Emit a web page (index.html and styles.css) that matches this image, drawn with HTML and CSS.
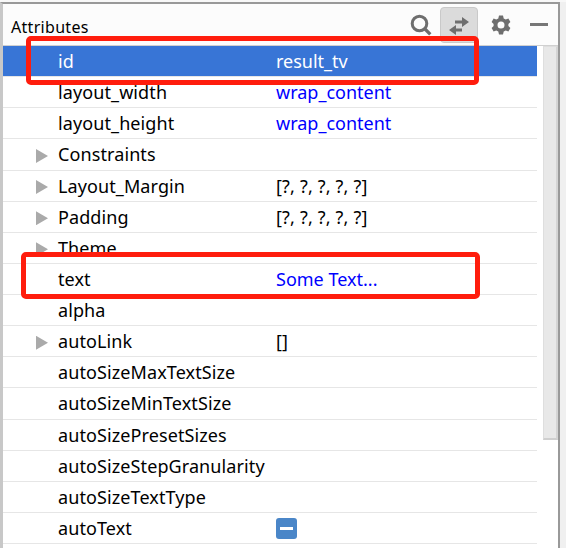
FILE: index.html
```html
<!DOCTYPE html>
<html lang="en">
<head>
<meta charset="utf-8">
<title>Attributes</title>
<link rel="stylesheet" href="styles.css">
</head>
<body>
<main class="panel">
  <header class="header">
    <h1 class="title">Attributes</h1>
    <div class="tools">
      <svg class="tool" width="24" height="24" viewBox="0 0 24 24"><circle cx="10.500" cy="10.500" r="7.300" fill="none" stroke="#6e6e6e" stroke-width="3"/><path d="M15.500 15.500l5.800 5.800" stroke="#6e6e6e" stroke-width="3.300"/></svg>
      <span class="toggle"><svg width="22" height="20" viewBox="0 0 22 20"><path d="M7 4.500h7V1l7 5-7 5V7.500H7zM14 12.500H8V9l-7 5 7 5v-3.500h6z" fill="#6e6e6e"/></svg></span>
      <svg class="tool gear" width="20" height="20" viewBox="0 0 20 20"><path fill="#6e6e6e" fill-rule="evenodd" d="M8 .5h4l.7 2.900 2 1.100 2.700-.9 2 3.500-2 1.900v2l2 1.900-2 3.500-2.700-.9-2 1.100-.7 2.900H8l-.7-2.900-2-1.100-2.700.9-2-3.500 2-1.900V9l-2-1.900 2-3.500 2.700.9 2-1.100zM10 6.500a3.500 3.500 0 1 0 0 7 3.500 3.500 0 0 0 0-7z"/></svg>
      <span class="minimize"></span>
    </div>
  </header>
  <div class="body">
    <div class="rows">
      <div class="row selected"><i></i><span>id</span><b>result_tv</b></div>
      <div class="row"><i></i><span>layout_width</span><b class="set">wrap_content</b></div>
      <div class="row"><i></i><span>layout_height</span><b class="set">wrap_content</b></div>
      <div class="row"><i class="arrow"></i><span>Constraints</span></div>
      <div class="row"><i class="arrow"></i><span>Layout_Margin</span><b class="list">[?, ?, ?, ?, ?]</b></div>
      <div class="row"><i class="arrow"></i><span>Padding</span><b class="list">[?, ?, ?, ?, ?]</b></div>
      <div class="row"><i class="arrow"></i><span>Theme</span></div>
      <div class="row"><i></i><span>text</span><b class="set">Some Text...</b></div>
      <div class="row"><i></i><span>alpha</span></div>
      <div class="row"><i class="arrow"></i><span>autoLink</span><b class="list">[]</b></div>
      <div class="row"><i></i><span>autoSizeMaxTextSize</span></div>
      <div class="row"><i></i><span>autoSizeMinTextSize</span></div>
      <div class="row"><i></i><span>autoSizePresetSizes</span></div>
      <div class="row"><i></i><span>autoSizeStepGranularity</span></div>
      <div class="row"><i></i><span>autoSizeTextType</span></div>
      <div class="row"><i></i><span>autoText</span><em class="check"></em></div>
    </div>
    <div class="thumb"></div>
  </div>
</main>
<div class="mark mark-id"></div>
<div class="mark mark-text"></div>
</body>
</html>
```
FILE: styles.css
```css
* { box-sizing: border-box; }
body {
  margin: 0;
  width: 566px;
  height: 550px;
  overflow: hidden;
  position: relative;
  background: linear-gradient(#f8f8f8 2px, transparent 2px), linear-gradient(90deg, transparent 560px, #f0f0f0 560px) 0 0 / 566px 548px no-repeat, #fff;
  font-family: "Noto Sans", "Open Sans", sans-serif;
  color: #000;
}
.panel {
  width: 560px;
  height: 546px;
  margin-top: 2px;
  border: solid;
  border-width: 2px 2px 0 3px;
  border-color: #999 #999 #999 #c8c8c8;
  background: #fff;
}
.header {
  height: 42px;
  display: flex;
  justify-content: space-between;
  background: #fcfcfc;
  border-bottom: 1px solid #d0d0d0;
}
.title {
  margin: 11px 0 0 8px;
  font-size: 16px;
  line-height: 24px;
  font-weight: 400;
  letter-spacing: .3px;
}
.tools { display: flex; align-items: flex-start; }
.tool { margin-top: 9px; }
.toggle {
  width: 38px;
  height: 36px;
  margin: 3px 0 0 7px;
  padding: 8px 0 0 7px;
  border: 1px solid #c9c9c9;
  border-radius: 4px;
  background: #dbdbdb;
}
.toggle svg { display: block; }
.gear { margin: 11px 0 0 13px; }
.minimize { width: 18px; height: 3px; background: #777; margin: 19px 10px 0 19px; }
.body { display: flex; justify-content: space-between; }
.rows { width: 534px; }
.row {
  height: 31.13px;
  display: grid;
  grid-template-columns: 55px 218px 1fr;
  align-items: center;
  border-bottom: 1px solid #e6e6e6;
  font-size: 18px;
  line-height: 28px;
}
.row span, .row b { font-weight: 400; white-space: nowrap; }
.row span { letter-spacing: .1px; }
.row .set { color: #00f; }
.row .list { letter-spacing: .17px; }
.row.selected { background: #3875d6; color: #fff; }
.arrow {
  width: 12px;
  height: 14px;
  margin: 3px 0 0 33px;
  background: #aaa;
  clip-path: polygon(0 0, 100% 50%, 0 100%);
}
.check {
  width: 21px;
  height: 21px;
  margin-top: 1px;
  border-radius: 3px;
  background: linear-gradient(#fff, #fff) center / 13px 3px no-repeat, #4a86c8;
}
.thumb {
  width: 15px;
  height: 394px;
  background: #e8e8e8;
  border: 1px solid #dedede;
  border-right: 2px solid #d4d4d4;
  border-bottom: 2px solid #cfcfcf;
}
.mark { position: absolute; border: 5px solid #ff1d0d; border-radius: 5px; }
.mark-id { left: 26px; top: 36px; width: 453px; height: 49px; }
.mark-text { left: 21px; top: 252px; width: 459px; height: 47px; }
```
